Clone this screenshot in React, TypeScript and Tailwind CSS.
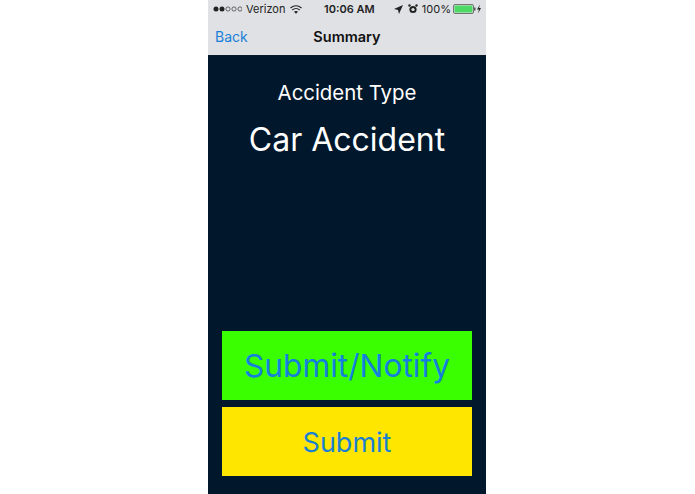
export default function App() {
  return (
    <div className="w-[695px] h-[494px] bg-white flex justify-center overflow-hidden" style={{ fontFamily: '"Inter", "Liberation Sans", sans-serif' }}>
      <div className="w-[278px] ml-[-1px] h-full flex flex-col bg-[#01172c]">
        <div className="h-[56px] shrink-0 bg-[#dfe1e4] flex flex-col border-b border-[#0a1a28]">
          <div className="h-[18px] flex items-center justify-between px-[5px] text-[11px] text-[#222]">
            <div className="flex items-center w-[100px]">
              <svg width="29" height="6" viewBox="0 0 29 6">
                <circle cx="3" cy="3" r="2.5" fill="#222" />
                <circle cx="9" cy="3" r="2.5" fill="#222" />
                <circle cx="15" cy="3" r="2.1" fill="none" stroke="#333" strokeWidth=".7" />
                <circle cx="21" cy="3" r="2.1" fill="none" stroke="#333" strokeWidth=".7" />
                <circle cx="27" cy="3" r="2.1" fill="none" stroke="#333" strokeWidth=".7" />
              </svg>
              <span className="ml-[4px]">Verizon</span>
              <svg width="12" height="9" viewBox="0 0 12 9" className="ml-[5px]">
                <path d="M0.5 3 Q6 -1.5 11.5 3" fill="none" stroke="#222" strokeWidth="1.2" />
                <path d="M2.3 5 Q6 2 9.7 5" fill="none" stroke="#222" strokeWidth="1.2" />
                <path d="M6 8.8 L4 6.8 Q6 5.2 8 6.8 Z" fill="#222" />
              </svg>
            </div>
            <span className="font-semibold text-[11px] ml-[-8px]">10:06 AM</span>
            <div className="flex items-center">
              <svg width="9" height="9" viewBox="0 0 9 9"><path d="M9 0 L0 4 L4 5 L5 9 Z" fill="#222" /></svg>
              <svg width="10" height="10" viewBox="0 0 10 10" className="ml-[5px]">
                <circle cx="5" cy="5.5" r="3.6" fill="#222" />
                <circle cx="5" cy="5.5" r="1.6" fill="#dfe1e4" />
                <circle cx="1.5" cy="1.5" r="1.2" fill="#222" />
                <circle cx="8.5" cy="1.5" r="1.2" fill="#222" />
              </svg>
              <span className="ml-[4px]">100%</span>
              <svg width="28" height="10" viewBox="0 0 28 10" className="ml-[2px]">
                <rect x=".5" y=".5" width="20" height="9" rx="1.5" fill="#dfe1e4" stroke="#444" strokeWidth=".7" />
                <rect x="1.5" y="1.5" width="18" height="7" fill="#4cd964" />
                <rect x="21.2" y="3.5" width="1.2" height="3" fill="#333" />
                <path d="M27 0.5 L24 5.5 L26 5.5 L25 9.5 L28 4 L26 4 Z" fill="#222" />
              </svg>
            </div>
          </div>
          <div className="relative flex-1 flex items-center justify-center">
            <span className="absolute left-[7px] top-[8px] text-[14px] leading-[22px] text-[#1a7fd8]">Back</span>
            <span className="text-[14.5px] font-semibold text-[#111]">Summary</span>
          </div>
        </div>
        <div className="flex-1 flex flex-col items-center text-white px-[14px]">
          <div className="mt-[23px] text-[20.4px] leading-[28px]">Accident Type</div>
          <div className="mt-[13px] text-[32px] leading-[40px]">Car Accident</div>
          <div className="flex-1" />
          <div className="w-[250px] h-[69px] bg-[#39ff00] flex items-center justify-center text-[31.7px] text-[#1480dc]">Submit/Notify</div>
          <div className="w-[250px] h-[69px] mt-[7px] mb-[18px] pt-[3px] bg-[#ffe600] flex items-center justify-center text-[27px] text-[#1a80d0]">Submit</div>
        </div>
      </div>
    </div>
  );
}
